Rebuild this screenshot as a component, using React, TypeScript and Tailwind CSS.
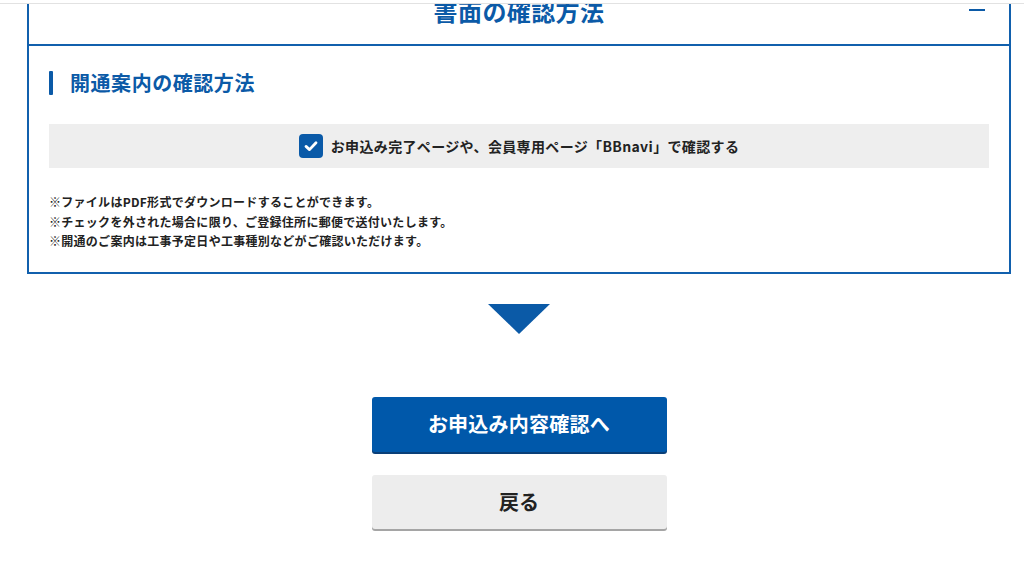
import React from "react";

const font = { fontFamily: '"Noto Sans CJK JP", "Noto Sans", sans-serif' };

function CheckBox() {
  return (
    <span className="flex h-[24px] w-[24px] items-center justify-center rounded-[4px] bg-[#0a5aa8]">
      <svg width="16" height="16" viewBox="0 0 16 16" fill="none">
        <path d="M3 8.4 L6.5 11.6 L13 4.8" stroke="#fff" strokeWidth="2.8" strokeLinecap="round" strokeLinejoin="round" />
      </svg>
    </span>
  );
}

export default function App() {
  return (
    <div className="relative h-[584px] w-[1024px] overflow-hidden bg-white" style={font}>
      {/* sticky top bar edge */}
      <div className="absolute left-0 top-0 z-10 h-[4px] w-full border-b border-[#e2e2e2] bg-white" />

      <div className="pl-[27px] pr-[13px]">
        <section className="border-x-2 border-b-2 border-[#1160ad]">
          <div className="grid h-[46px] grid-cols-[1fr_auto_1fr] border-b-2 border-[#1160ad]">
            <div />
            <h2 className="text-[24px] font-bold leading-[22px] tracking-[0.4px] text-[#0b5aa7]">書面の確認方法</h2>
            <div className="flex justify-end pr-[24px] pt-[9px]">
              <span className="block h-[2px] w-[16px] bg-[#0b5aa7]" />
            </div>
          </div>

          <div className="px-[20px] pb-[21px] pt-[25px]">
            <h3 className="flex h-[24px] items-center gap-[17px]">
              <span className="block h-[24px] w-[4px] rounded-[1px] bg-[#0b5aa7]" />
              <span className="text-[20px] font-bold leading-[24px] tracking-[0.55px] text-[#0b5aa7]">開通案内の確認方法</span>
            </h3>

            <div className="mt-[29px] flex h-[44px] items-center justify-center gap-[8px] bg-[#eeeeee]">
              <CheckBox />
              <span className="text-[14px] font-semibold tracking-[0.35px] text-[#222]">
                お申込み完了ページや、会員専用ページ「BBnavi」で確認する
              </span>
            </div>

            <ul className="mt-[24px] text-[12px] font-semibold leading-[19.5px] tracking-[0.28px] text-[#222]">
              <li>※ファイルはPDF形式でダウンロードすることができます。</li>
              <li>※チェックを外された場合に限り、ご登録住所に郵便で送付いたします。</li>
              <li>※開通のご案内は工事予定日や工事種別などがご確認いただけます。</li>
            </ul>
          </div>
        </section>

        <div className="flex flex-col items-center">
          <svg className="mt-[30px]" width="62" height="30" viewBox="0 0 62 30">
            <polygon points="0,0 62,0 31,30" fill="#0b5aa7" />
          </svg>

          <button className="mt-[63px] flex h-[55px] w-[295px] items-center justify-center rounded-[3px] bg-[#0058aa] text-[20px] font-bold tracking-[0.25px] text-white shadow-[0_2px_0_#0a3f78]">
            お申込み内容確認へ
          </button>

          <button className="mt-[23px] flex h-[54px] w-[295px] items-center justify-center rounded-[3px] bg-[#ededed] text-[20px] font-bold text-[#222] shadow-[0_2px_0_#a5a5a5]">
            戻る
          </button>
        </div>
      </div>
    </div>
  );
}
